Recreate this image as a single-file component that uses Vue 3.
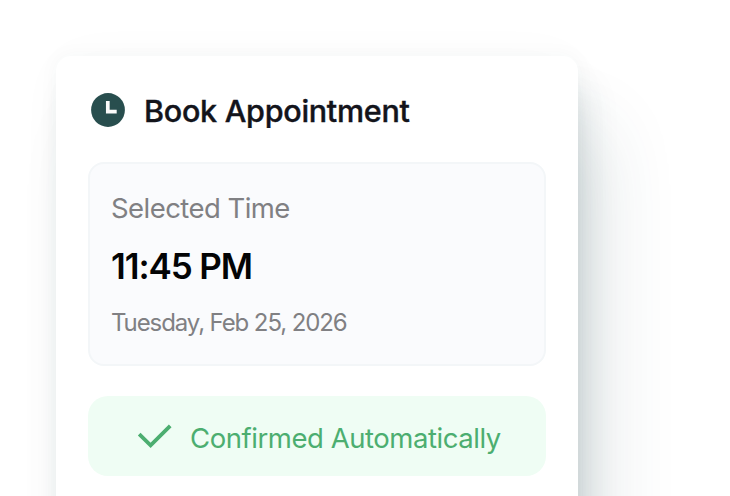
<script setup>
const title = "Book Appointment";

const appointment = {
  label: "Selected Time",
  time: "11:45 PM",
  date: "Tuesday, Feb 25, 2026",
};

const status = "Confirmed Automatically";
</script>

<template>
  <main class="page">
    <section class="card">
      <header class="card-header">
        <svg class="clock-icon" viewBox="0 0 40 40" aria-hidden="true">
          <circle cx="20" cy="20" r="16.9" fill="#284e4e" />
          <path d="M19.8 11.1V21.7H28.7" fill="none" stroke="#fafaf9" stroke-width="3.7" />
        </svg>
        <h1 class="title">{{ title }}</h1>
      </header>

      <div class="slot">
        <p class="slot-label">{{ appointment.label }}</p>
        <p class="slot-time">{{ appointment.time }}</p>
        <p class="slot-date">{{ appointment.date }}</p>
      </div>

      <div class="status">
        <svg class="check-icon" viewBox="0 0 36 28" aria-hidden="true">
          <path d="M3.2 12.2 14.6 23.3 34.2 3.8" fill="none" stroke="#4cae70" stroke-width="3.8" />
        </svg>
        <span class="status-text">{{ status }}</span>
      </div>
    </section>
  </main>
</template>

<style>
body {
  margin: 0;
  background: #fff;
  overflow: hidden;
}
</style>

<style scoped>
.page {
  box-sizing: border-box;
  height: 496px;
  padding: 56px 0 0 56px;
  overflow: hidden;
  font-family: Inter, "Liberation Sans", sans-serif;
}
.card {
  box-sizing: border-box;
  width: 521.5px;
  height: 640px;
  padding: 37px 32px 0;
  border-radius: 15px;
  background: #fff;
  box-shadow:
    0 0 20px rgba(40, 78, 78, 0.04),
    0 0 60px rgba(40, 78, 78, 0.02),
    32px 66px 76px -8px rgba(40, 78, 88, 0.14),
    12px 28px 34px -4px rgba(40, 78, 88, 0.13);
}
.card-header {
  display: flex;
  align-items: center;
  height: 36px;
  margin-bottom: 33px;
}
.clock-icon {
  width: 40px;
  height: 40px;
  margin: -2px 16px 0 0;
}
.title {
  margin: 0;
  font-size: 30.5px;
  font-weight: 500;
  line-height: 36px;
  letter-spacing: -0.27px;
  color: #13141b;
  white-space: nowrap;
  -webkit-text-stroke: 0.4px #13141b;
}
.slot {
  box-sizing: border-box;
  height: 203.5px;
  padding: 27px 21px 0;
  border: 2px solid #f3f6f8;
  border-radius: 16px;
  background: #fafbfd;
}
.slot p {
  margin: 0;
  white-space: nowrap;
}
.slot-label {
  font-size: 27.5px;
  line-height: 34px;
  letter-spacing: -0.55px;
  color: #808083;
}
.slot .slot-time {
  margin: 19px 0 20px;
  font-size: 35px;
  font-weight: 600;
  line-height: 44px;
  letter-spacing: -1.1px;
  color: #030405;
}
.slot-date {
  font-size: 24px;
  line-height: 30px;
  letter-spacing: -1.1px;
  color: #808083;
}
.status {
  box-sizing: border-box;
  display: flex;
  align-items: center;
  height: 80px;
  margin-top: 30.5px;
  padding: 4px 0 0 48px;
  border-radius: 20px;
  background: #effdf4;
}
.check-icon {
  width: 36px;
  height: 28px;
  margin: -4px 18px 0 0;
}
.status-text {
  font-size: 27.5px;
  line-height: 34px;
  letter-spacing: -0.45px;
  color: #4cae70;
  white-space: nowrap;
}
</style>
